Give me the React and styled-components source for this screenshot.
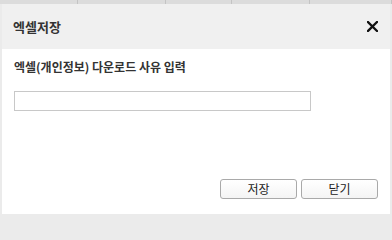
import React, { useState } from 'react';
import styled, { createGlobalStyle } from 'styled-components';

const GlobalStyle = createGlobalStyle`
  html, body {
    margin: 0;
    padding: 0;
    background: #ebebeb;
  }
  * {
    box-sizing: border-box;
  }
`;

const columns = [78, 88, 66, 78, 82];

const App = () => {
  const [reason, setReason] = useState('');

  return (
    <Page>
      <GlobalStyle />
      <HeaderStrip>
        {columns.map((w, i) => (
          <HeaderCell key={i} $width={w} />
        ))}
      </HeaderStrip>
      <Dialog>
        <TitleBar>
          <Title>엑셀저장</Title>
          <CloseButton aria-label="닫기">
            <svg width="11" height="11" viewBox="0 0 11 11">
              <path d="M1 1 L10 10 M10 1 L1 10" stroke="#111" strokeWidth="2.3" strokeLinecap="square" />
            </svg>
          </CloseButton>
        </TitleBar>
        <Body>
          <Label>엑셀(개인정보) 다운로드 사유 입력</Label>
          <ReasonInput
            type="text"
            value={reason}
            onChange={(e) => setReason(e.target.value)}
          />
          <Footer>
            <Button>저장</Button>
            <Button>닫기</Button>
          </Footer>
        </Body>
      </Dialog>
    </Page>
  );
};

const Page = styled.div`
  width: 392px;
  height: 218px;
  overflow: hidden;
  background: #ebebeb;
  font-family: "Noto Sans CJK KR", "Noto Sans", sans-serif;
`;

const HeaderStrip = styled.div`
  display: flex;
  height: 4px;
  background: #dcdcdc;
`;

const HeaderCell = styled.div`
  width: ${(p) => p.$width}px;
  height: 100%;
  border-right: 1px solid #c4c4c4;
`;

const Dialog = styled.div`
  margin: 0 2px;
  width: 388px;
  background: #ffffff;
  display: flex;
  flex-direction: column;
`;

const TitleBar = styled.div`
  height: 45px;
  background: #f0f0f0;
  display: flex;
  align-items: center;
  justify-content: space-between;
  padding: 0 12px 0 11px;
`;

const Title = styled.h1`
  margin: 0;
  font-size: 13px;
  line-height: 16px;
  font-weight: 700;
  color: #333333;
`;

const CloseButton = styled.button`
  border: none;
  background: transparent;
  padding: 0;
  width: 11px;
  height: 11px;
  display: flex;
  cursor: pointer;
`;

const Body = styled.div`
  display: flex;
  flex-direction: column;
  padding: 10px 12px 15px 12px;
`;

const Label = styled.p`
  margin: 0;
  font-size: 12px;
  line-height: 16px;
  font-weight: 700;
  color: #333333;
`;

const ReasonInput = styled.input`
  margin-top: 16px;
  width: 297px;
  height: 20px;
  border: 1px solid #c8c8c8;
  background: #ffffff;
  padding: 0 4px;
  font-size: 12px;
  font-family: inherit;
  outline: none;
`;

const Footer = styled.div`
  margin-top: 68px;
  display: flex;
  justify-content: flex-end;
  gap: 4px;
`;

const Button = styled.button`
  width: 77px;
  height: 20px;
  padding: 0;
  border: 1px solid #a9a9a9;
  border-radius: 3px;
  background: linear-gradient(#ffffff, #f4f4f4);
  font-family: inherit;
  font-size: 12px;
  line-height: 18px;
  color: #222222;
  cursor: pointer;
`;

export default App;
